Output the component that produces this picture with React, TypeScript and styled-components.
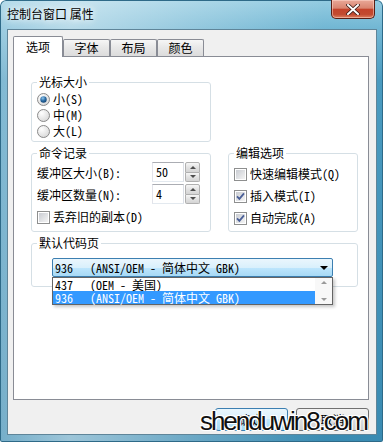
import styled, { createGlobalStyle } from "styled-components";

const ui = `"Noto Sans Mono CJK SC", "Noto Sans CJK SC", "Liberation Mono", monospace`;

const GlobalStyle = createGlobalStyle`
  html, body {
    margin: 0;
    padding: 0;
    background: #ffffff;
  }
  body {
    font-family: ${ui};
    font-size: 12px;
    color: #000;
  }
`;

const Window = styled.div`
  width: 383px;
  height: 442px;
  box-sizing: border-box;
  display: flex;
  flex-direction: column;
  border-radius: 6px 6px 2px 2px;
  overflow: hidden;
  background: linear-gradient(
      90deg,
      rgba(255, 255, 255, 0.3) 0%,
      rgba(255, 255, 255, 0.5) 18%,
      rgba(255, 255, 255, 0.25) 50%,
      rgba(255, 255, 255, 0) 85%
    ),
    linear-gradient(180deg, #94cce2 0px, #72b7d4 28px, #4a9bc0 80px, #3a8bb2 100%);
  box-shadow: inset 0 0 0 1px #2e6a88;
`;

const TitleBar = styled.div`
  height: 29px;
  flex: none;
  display: flex;
  justify-content: space-between;
  align-items: flex-start;
`;

const Title = styled.div`
  padding: 6px 0 0 7px;
  font-family: "Noto Sans CJK SC", sans-serif;
  font-size: 12px;
  line-height: 16px;
  color: #000;
  text-shadow: 0 0 6px #fff, 0 0 10px rgba(255, 255, 255, 0.9);
`;

const CloseButton = styled.div`
  width: 44px;
  height: 19px;
  margin-right: 8px;
  box-sizing: border-box;
  border: 1px solid #5a1e14;
  border-top: none;
  border-radius: 0 0 5px 5px;
  background: linear-gradient(
    180deg,
    #e9a898 0%,
    #d98470 45%,
    #c4432b 52%,
    #c24a30 80%,
    #de8060 100%
  );
  box-shadow: inset 0 0 0 1px rgba(255, 220, 210, 0.5);
  display: flex;
  align-items: center;
  justify-content: center;
`;

const Client = styled.div`
  position: relative;
  flex: 1;
  margin: 0 6px 7px 7px;
  background: #f0f0f0;
  border: 1px solid #5f8599;
  padding: 6px 7px 0 5px;
  display: flex;
  flex-direction: column;
`;

const TabStrip = styled.div`
  height: 20px;
  display: flex;
  align-items: flex-end;
  position: relative;
  z-index: 1;
`;

const Tab = styled.div<{ $active?: boolean }>`
  width: ${(p) => (p.$active ? 50 : 47)}px;
  height: ${(p) => (p.$active ? 21 : 17)}px;
  margin-bottom: ${(p) => (p.$active ? -1 : 0)}px;
  box-sizing: border-box;
  border: 1px solid #898c95;
  border-bottom: none;
  border-radius: 2px 2px 0 0;
  background: ${(p) =>
    p.$active
      ? "#ffffff"
      : "linear-gradient(180deg, #f6f6f6 0%, #e8e8e8 45%, #dcdcdc 100%)"};
  display: flex;
  align-items: center;
  justify-content: center;
  font-size: 12px;
  line-height: 14px;
`;

const Panel = styled.div`
  height: 344px;
  box-sizing: border-box;
  background: #ffffff;
  border: 1px solid #898c95;
  padding: 18px 0 0 17px;
`;

const Group = styled.fieldset<{ $w: number; $pt: number; $pb: number }>`
  width: ${(p) => p.$w}px;
  box-sizing: border-box;
  margin: 0;
  min-width: 0;
  border: 1px solid #d5dfe5;
  border-radius: 3px;
  padding: ${(p) => p.$pt}px 4px ${(p) => p.$pb}px 5px;
`;

const Legend = styled.legend`
  padding: 0 2px;
  font-size: 12px;
  line-height: 14px;
`;

const GroupRow = styled.div`
  display: flex;
  gap: 17px;
  margin-top: 4px;
`;

const Spaced = styled.div`
  margin-top: 4px;
`;

const OptionRow = styled.div<{ $h: number }>`
  height: ${(p) => p.$h}px;
  display: flex;
  align-items: center;
  gap: 3px;
  line-height: 14px;
`;

const FieldRow = styled.div`
  height: 20px;
  display: flex;
  align-items: center;
  margin-bottom: 2px;
`;

const FieldLabel = styled.span`
  width: 115px;
`;

const NumberBox = styled.div`
  width: 32px;
  height: 20px;
  box-sizing: border-box;
  border: 1px solid #abadb3;
  border-left-color: #e2e3ea;
  border-right-color: #dbdfe6;
  border-bottom-color: #e3e9ef;
  background: #fff;
  padding-left: 3px;
  line-height: 18px;
`;

const Spin = styled.div`
  width: 15px;
  height: 20px;
  margin-left: 1px;
  display: flex;
  flex-direction: column;
`;

const SpinHalf = styled.div<{ $down?: boolean }>`
  flex: 1;
  box-sizing: border-box;
  border: 1px solid #b0b0b0;
  border-top-width: ${(p) => (p.$down ? 0 : 1)}px;
  border-radius: ${(p) => (p.$down ? "0 0 2px 2px" : "2px 2px 0 0")};
  background: linear-gradient(180deg, #f6f6f6 0%, #e2e2e2 50%, #d4d4d4 100%);
  display: flex;
  align-items: center;
  justify-content: center;
`;

const Arrow = styled.span<{ $down?: boolean; $color?: string }>`
  width: 0;
  height: 0;
  border-left: 3px solid transparent;
  border-right: 3px solid transparent;
  ${(p) =>
    p.$down
      ? `border-top: 3px solid ${p.$color || "#4d4d4d"};`
      : `border-bottom: 3px solid ${p.$color || "#4d4d4d"};`}
`;

const Combo = styled.div`
  position: relative;
  margin-left: 15px;
  width: 281px;
  height: 19px;
  box-sizing: border-box;
  border: 1px solid #3c7fb1;
  border-radius: 2px;
  background: linear-gradient(180deg, #eaf6fd 0%, #d9f0fc 50%, #bee6fd 50%, #a7d9f5 100%);
  display: flex;
  align-items: center;
  padding-left: 2px;
  line-height: 14px;
`;

const CodeNum = styled.span`
  width: 35px;
  flex: none;
`;

const ComboArrow = styled.span`
  margin-left: auto;
  margin-right: 4px;
  width: 0;
  height: 0;
  border-left: 4px solid transparent;
  border-right: 4px solid transparent;
  border-top: 4px solid #000;
`;

const DropList = styled.div`
  position: absolute;
  top: calc(100% + 1px);
  left: -1px;
  width: 281px;
  height: 28px;
  box-sizing: border-box;
  border: 1px solid #646464;
  background: #fff;
  box-shadow: 2px 2px 3px rgba(0, 0, 0, 0.22);
  display: flex;
  z-index: 2;
`;

const ListItems = styled.div`
  flex: 1;
  display: flex;
  flex-direction: column;
`;

const ListItem = styled.div<{ $sel?: boolean }>`
  height: 13px;
  line-height: 13px;
  display: flex;
  padding-left: 2px;
  background: ${(p) => (p.$sel ? "#3399ff" : "transparent")};
  color: ${(p) => (p.$sel ? "#fff" : "#000")};
`;

const ScrollBar = styled.div`
  width: 17px;
  display: flex;
  flex-direction: column;
  justify-content: space-between;
  align-items: center;
  padding: 3px 0;
  box-sizing: border-box;
  background: #f8f8f8;
`;

const ButtonRow = styled.div`
  display: flex;
  justify-content: flex-end;
  gap: 8px;
  margin-top: 8px;
`;

const Button = styled.div<{ $default?: boolean }>`
  width: 73px;
  height: 23px;
  box-sizing: border-box;
  border: 1px solid ${(p) => (p.$default ? "#3c7fb1" : "#707070")};
  border-radius: 3px;
  background: ${(p) =>
    p.$default
      ? "linear-gradient(180deg, #eaf6fd 0%, #d9f0fc 50%, #bee6fd 50%, #a7d9f5 100%)"
      : "linear-gradient(180deg, #f2f2f2 0%, #ebebeb 50%, #dddddd 50%, #cfcfcf 100%)"};
  display: flex;
  align-items: center;
  justify-content: center;
  font-size: 12px;
`;

const Watermark = styled.div`
  position: absolute;
  right: 9px;
  bottom: 0;
  font-family: "Liberation Sans", Arial, sans-serif;
  font-size: 26px;
  line-height: 26px;
  letter-spacing: -2px;
  color: #111;
  -webkit-text-stroke: 0.9px #111;
  paint-order: stroke fill;
  text-shadow: 1px 1px 0 #fff, -1px -1px 0 #fff, 1px -1px 0 #fff, -1px 1px 0 #fff,
    0 1px 0 #fff, 0 -1px 0 #fff, 1px 0 0 #fff, -1px 0 0 #fff;
`;

const Radio = ({ checked }: { checked?: boolean }) => (
  <svg width="13" height="13" viewBox="0 0 13 13">
    <defs>
      <radialGradient id="rfill" cx="0.35" cy="0.3" r="0.8">
        <stop offset="0" stopColor="#ffffff" />
        <stop offset="1" stopColor="#d6d6d6" />
      </radialGradient>
      <radialGradient id="rdot" cx="0.4" cy="0.3" r="0.8">
        <stop offset="0" stopColor="#8fc6ee" />
        <stop offset="0.5" stopColor="#2b6ca5" />
        <stop offset="1" stopColor="#0d3a66" />
      </radialGradient>
    </defs>
    <circle cx="6.5" cy="6.5" r="6" fill="url(#rfill)" stroke="#8a8a8a" />
    {checked && <circle cx="6.5" cy="6.5" r="3.2" fill="url(#rdot)" />}
  </svg>
);

const Check = ({ checked }: { checked?: boolean }) => (
  <svg width="13" height="13" viewBox="0 0 13 13">
    <defs>
      <linearGradient id="cfill" x1="0" y1="0" x2="1" y2="1">
        <stop offset="0" stopColor="#c9ccd2" />
        <stop offset="1" stopColor="#f4f4f4" />
      </linearGradient>
    </defs>
    <rect x="0.5" y="0.5" width="12" height="12" fill="#fff" stroke="#8e8f8f" />
    <rect x="2" y="2" width="9" height="9" fill="url(#cfill)" />
    {checked && (
      <path d="M3 6.3 L5.4 8.8 L10 3.4" fill="none" stroke="#4a5f97" strokeWidth="1.8" />
    )}
  </svg>
);

const NumberField = ({ label, value }: { label: string; value: string }) => (
  <FieldRow>
    <FieldLabel>{label}</FieldLabel>
    <NumberBox>{value}</NumberBox>
    <Spin>
      <SpinHalf>
        <Arrow />
      </SpinHalf>
      <SpinHalf $down>
        <Arrow $down />
      </SpinHalf>
    </Spin>
  </FieldRow>
);

const App = () => {
  return (
    <>
      <GlobalStyle />
      <Window>
        <TitleBar>
          <Title>控制台窗口 属性</Title>
          <CloseButton>
            <svg width="14" height="11" viewBox="0 0 14 11">
              <path
                d="M2 1 L12 10 M12 1 L2 10"
                stroke="#3a1a16"
                strokeWidth="3.6"
                strokeLinecap="square"
              />
              <path
                d="M2 1 L12 10 M12 1 L2 10"
                stroke="#ffffff"
                strokeWidth="2"
                strokeLinecap="square"
              />
            </svg>
          </CloseButton>
        </TitleBar>
        <Client>
          <TabStrip>
            <Tab $active>选项</Tab>
            <Tab>字体</Tab>
            <Tab>布局</Tab>
            <Tab>颜色</Tab>
          </TabStrip>
          <Panel>
            <Group $w={180} $pt={2} $pb={2}>
              <Legend>光标大小</Legend>
              <OptionRow $h={16}>
                <Radio checked />
                小(S)
              </OptionRow>
              <OptionRow $h={16}>
                <Radio />
                中(M)
              </OptionRow>
              <OptionRow $h={16}>
                <Radio />
                大(L)
              </OptionRow>
            </Group>
            <GroupRow>
              <Group $w={180} $pt={2} $pb={3}>
                <Legend>命令记录</Legend>
                <NumberField label="缓冲区大小(B):" value="50" />
                <NumberField label="缓冲区数量(N):" value="4" />
                <Spaced>
                  <OptionRow $h={18}>
                    <Check />
                    丢弃旧的副本(D)
                  </OptionRow>
                </Spaced>
              </Group>
              <Group $w={130} $pt={3} $pb={2}>
                <Legend>编辑选项</Legend>
                <OptionRow $h={22}>
                  <Check />
                  快速编辑模式(Q)
                </OptionRow>
                <OptionRow $h={22}>
                  <Check checked />
                  插入模式(I)
                </OptionRow>
                <OptionRow $h={22}>
                  <Check checked />
                  自动完成(A)
                </OptionRow>
              </Group>
            </GroupRow>
            <Spaced>
              <Group $w={327} $pt={8} $pb={9}>
                <Legend>默认代码页</Legend>
                <Combo>
                  <CodeNum>936</CodeNum>
                  (ANSI/OEM - 简体中文 GBK)
                  <ComboArrow />
                  <DropList>
                    <ListItems>
                      <ListItem>
                        <CodeNum>437</CodeNum>(OEM - 美国)
                      </ListItem>
                      <ListItem $sel>
                        <CodeNum>936</CodeNum>(ANSI/OEM - 简体中文 GBK)
                      </ListItem>
                    </ListItems>
                    <ScrollBar>
                      <Arrow $color="#9a9a9a" />
                      <Arrow $down $color="#9a9a9a" />
                    </ScrollBar>
                  </DropList>
                </Combo>
              </Group>
            </Spaced>
          </Panel>
          <ButtonRow>
            <Button $default>确定</Button>
            <Button>取消</Button>
          </ButtonRow>
          <Watermark>shenduwin8.com</Watermark>
        </Client>
      </Window>
    </>
  );
};

export default App;
